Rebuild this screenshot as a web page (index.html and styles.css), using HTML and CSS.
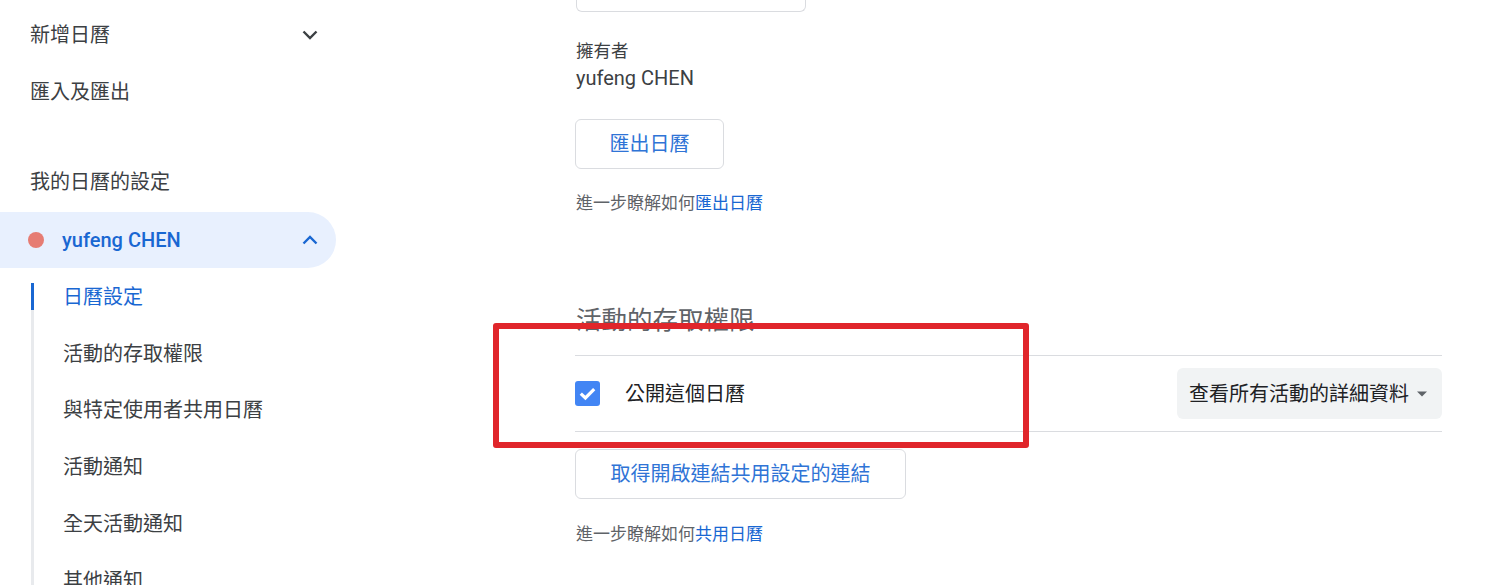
FILE: index.html
```html
<!DOCTYPE html>
<html lang="zh-Hant">
<head>
<meta charset="utf-8">
<title>日曆設定</title>
<link rel="stylesheet" href="styles.css">
</head>
<body>
<div class="page">
  <nav class="sidebar">
    <div class="nav-item">
      <span>新增日曆</span>
      <svg class="chev" width="20" height="20" viewBox="0 0 20 20"><path d="M3.5 6.5 L10 13 L16.5 6.5" fill="none" stroke="#3c4043" stroke-width="2.4"/></svg>
    </div>
    <div class="nav-item"><span>匯入及匯出</span></div>
    <div class="nav-heading">我的日曆的設定</div>
    <div class="cal-pill">
      <span class="dot"></span>
      <span class="cal-name">yufeng CHEN</span>
      <svg class="chev" width="20" height="20" viewBox="0 0 20 20"><path d="M3.5 13.5 L10 7 L16.5 13.5" fill="none" stroke="#1967d2" stroke-width="2.4"/></svg>
    </div>
    <ul class="sub-list">
      <li class="sub-item active">日曆設定</li>
      <li class="sub-item">活動的存取權限</li>
      <li class="sub-item">與特定使用者共用日曆</li>
      <li class="sub-item">活動通知</li>
      <li class="sub-item">全天活動通知</li>
      <li class="sub-item">其他通知</li>
    </ul>
  </nav>
  <main class="main">
    <div class="top-box"></div>
    <div class="label">擁有者</div>
    <div class="owner">yufeng CHEN</div>
    <button class="btn btn-export">匯出日曆</button>
    <p class="help">進一步瞭解如何<a class="link">匯出日曆</a></p>
    <h2 class="section-title">活動的存取權限</h2>
    <div class="divider"></div>
    <div class="perm-row">
      <div class="check-wrap">
        <span class="checkbox">
          <svg width="25" height="25" viewBox="0 0 25 25"><path d="M5.8 12.6 L10.4 17 L19.2 8.2" fill="none" stroke="#fff" stroke-width="3.2"/></svg>
        </span>
        <span class="check-label">公開這個日曆</span>
      </div>
      <div class="select">
        <span>查看所有活動的詳細資料</span>
        <svg width="12" height="8" viewBox="0 0 12 8"><path d="M1 1.5 L11 1.5 L6 6.5 Z" fill="#5f6368"/></svg>
      </div>
    </div>
    <div class="divider"></div>
    <button class="btn btn-share">取得開啟連結共用設定的連結</button>
    <p class="help help-share">進一步瞭解如何<a class="link">共用日曆</a></p>
  </main>
</div>
<div class="highlight"></div>
</body>
</html>
```

FILE: styles.css
```css
html, body {
  margin: 0;
  padding: 0;
  background: #ffffff;
  overflow: hidden;
}
body {
  width: 1493px;
  height: 585px;
  position: relative;
  font-family: "Roboto", "Noto Sans CJK TC", sans-serif;
  color: #3c4043;
}
.page {
  display: flex;
  align-items: flex-start;
  height: 585px;
  overflow: hidden;
}
.sidebar {
  width: 336px;
  flex: none;
  padding-top: 6px;
}
.nav-item {
  height: 57px;
  display: flex;
  align-items: center;
  justify-content: space-between;
  padding: 0 16px 0 30px;
  font-size: 20px;
  line-height: 28px;
  color: #3c4043;
}
.nav-heading {
  margin-top: 50px;
  padding-left: 30px;
  font-size: 20px;
  line-height: 24px;
  color: #3c4043;
}
.cal-pill {
  margin-top: 18px;
  height: 56px;
  background: #e8f0fe;
  border-radius: 0 28px 28px 0;
  display: flex;
  align-items: center;
  padding: 0 16px 0 28px;
}
.dot {
  width: 16px;
  height: 16px;
  border-radius: 50%;
  background: #e67c73;
  flex: none;
}
.cal-name {
  margin-left: 18px;
  flex: 1;
  font-size: 20px;
  font-weight: 500;
  color: #1967d2;
  line-height: 28px;
}
.chev {
  flex: none;
}
.sub-list {
  list-style: none;
  margin: 0 0 0 31px;
  padding: 0.6px 0 0 0;
  position: relative;
}
.sub-list::before {
  content: "";
  position: absolute;
  left: 0;
  top: 15px;
  bottom: -40px;
  width: 3px;
  background: #e8eaed;
}
.sub-item {
  position: relative;
  height: 56.75px;
  display: flex;
  align-items: center;
  padding-left: 32px;
  font-size: 20px;
  line-height: 28px;
  color: #3c4043;
}
.sub-item.active {
  color: #1967d2;
}
.sub-item.active::before {
  content: "";
  position: absolute;
  left: 0;
  top: 14.5px;
  height: 27px;
  width: 3px;
  background: #1967d2;
}
.main {
  margin-left: 239px;
  width: 867px;
  flex: none;
}
.top-box {
  width: 228px;
  height: 11px;
  border: 1px solid #dadce0;
  border-top: none;
  border-radius: 0 0 6px 6px;
  margin-left: 1px;
}
.label {
  margin-top: 27px;
  margin-left: 1px;
  font-size: 17.5px;
  line-height: 24px;
  color: #3c4043;
}
.owner {
  margin-top: 1px;
  margin-left: 1px;
  font-size: 20px;
  line-height: 28px;
  color: #3c4043;
}
.btn {
  display: flex;
  align-items: center;
  justify-content: center;
  box-sizing: border-box;
  height: 50px;
  background: #fff;
  border: 1px solid #dadce0;
  border-radius: 6px;
  font-family: "Roboto", "Noto Sans CJK TC", sans-serif;
  font-size: 20px;
  line-height: 28px;
  color: #2f74d6;
  padding: 0;
  white-space: nowrap;
  cursor: pointer;
}
.btn-export {
  margin-top: 27px;
  width: 149px;
}
.help {
  margin: 22px 0 0 1px;
  font-size: 17px;
  line-height: 24px;
  color: #5f6368;
}
.link {
  color: #1967d2;
}
.section-title {
  margin: 87px 0 0 1px;
  font-size: 25.5px;
  font-weight: 400;
  line-height: 36px;
  color: #5f6368;
}
.divider {
  height: 1px;
  background: #dadce0;
}
.section-title + .divider {
  margin-top: 17px;
}
.perm-row {
  height: 75px;
  display: flex;
  align-items: center;
  justify-content: space-between;
}
.check-wrap {
  display: flex;
  align-items: center;
}
.checkbox {
  width: 25px;
  height: 25px;
  border-radius: 3px;
  background: #4285f4;
  display: flex;
}
.check-label {
  margin-left: 25px;
  font-size: 20px;
  line-height: 28px;
  color: #202124;
}
.select {
  box-sizing: border-box;
  width: 265px;
  height: 51px;
  background: #f1f3f4;
  border-radius: 6px;
  display: flex;
  align-items: center;
  justify-content: space-between;
  padding: 0 14px 0 12px;
  font-size: 20px;
  line-height: 28px;
  color: #202124;
}
.btn-share {
  margin-top: 17px;
  width: 331px;
}
.help-share {
  margin-top: 23px;
}
.highlight {
  position: absolute;
  left: 493px;
  top: 323px;
  width: 524px;
  height: 113px;
  border: 6px solid #e0262b;
  border-radius: 3px;
  pointer-events: none;
}
```
